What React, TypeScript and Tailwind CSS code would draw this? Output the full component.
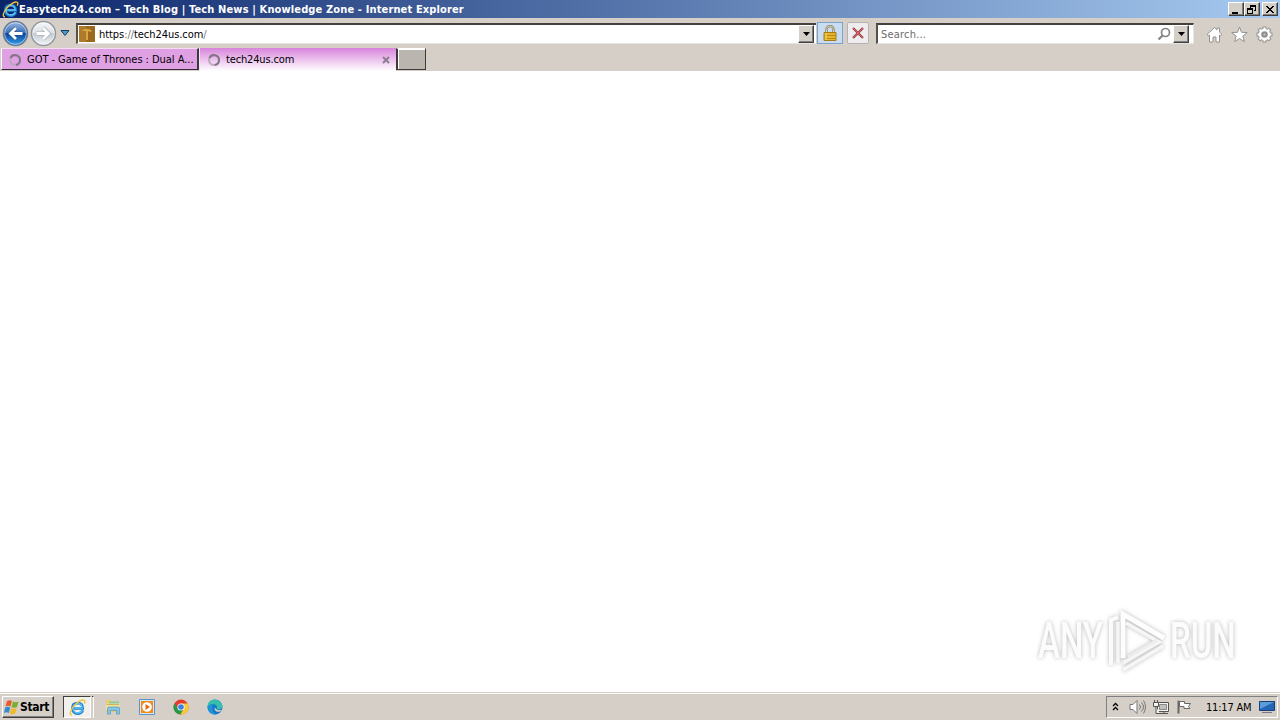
import { ReactNode } from "react";
import clsx from "clsx";

const raised =
  "border border-t-white border-l-white border-r-[#404040] border-b-[#404040] shadow-[inset_-1px_-1px_0_#808080]";

const gearTeeth = [0, 45, 90, 135, 180, 225, 270, 315];

const IeLogo = ({ size }: { size: number }) => (
  <svg width={size} height={size} viewBox="0 0 16 16" fill="none" className="shrink-0">
    <path d="M13 10.600C12.200 12.700 10.400 13.700 8.200 13.700c-3.200 0-5-2.200-5-5S5 3.900 8.200 3.900c3 0 4.700 2 4.700 4.900H4.500" stroke="#1d7fcb" strokeWidth="2.500" />
    <path d="M12.600 10.700C11.700 12.300 10.200 13.200 8.200 13.200c-2.700 0-4.400-2-4.400-4.500S5.500 4.300 8.200 4.300c2.600 0 4.100 1.800 4.100 4.200H5" stroke="#63c6f4" strokeWidth="1.300" />
    <path d="M2.800 15C.2 15 .8 11 4.300 6.900 8 2.500 12.600.1 14.300 1.200c.9.600.7 1.900 0 3.200" stroke="#efc43b" strokeWidth="1.300" />
  </svg>
);

const Arrow = ({ back }: { back?: boolean }) => (
  <svg width="27" height="27" viewBox="0 0 27 27" className="shrink-0">
    <defs>
      <linearGradient id={back ? "backFill" : "nextFill"} x2="0" y2="1">
        <stop stopColor={back ? "#9dbbe2" : "#f8f9fb"} />
        <stop offset=".48" stopColor={back ? "#386fb9" : "#dadfe5"} />
        <stop offset=".5" stopColor={back ? "#08439a" : "#c1c9d2"} />
        <stop offset="1" stopColor={back ? "#37a4ef" : "#f5f7f9"} />
      </linearGradient>
    </defs>
    <circle cx="13.500" cy="13.500" r="12" fill={back ? "url(#backFill)" : "url(#nextFill)"} stroke={back ? "#6d7c94" : "#92979e"} strokeWidth="1.500" />
    <circle cx="13.500" cy="13.500" r="10.800" fill="none" stroke="#fff" strokeOpacity=".5" />
    <g transform={back ? undefined : "translate(27 0) scale(-1 1)"}>
      <path d="M20.500 13.500H8.500m5.500-5.500-5.500 5.500L14 19" fill="none" stroke={back ? "#26548f" : "#a4aab2"} strokeWidth="4.200" />
      <path d="M20.500 13.500H8.500m5.500-5.500-5.500 5.500L14 19" fill="none" stroke="#fff" strokeWidth="2.800" />
    </g>
  </svg>
);

const WindowButton = ({ children, className }: { children: ReactNode; className?: string }) => (
  <button className={clsx("flex h-[14px] w-4 items-center justify-center bg-[#d4d0c8]", raised, className)}>
    <svg width="12" height="11" viewBox="0 0 12 11" fill="none" stroke="#000" shapeRendering="crispEdges" className="shrink-0">
      {children}
    </svg>
  </button>
);

const DropButton = () => (
  <button className={clsx("flex h-[18px] w-4 shrink-0 items-center justify-center bg-[#d4d0c8]", raised)}>
    <svg width="7" height="4" viewBox="0 0 7 4">
      <path d="M0 0h7L3.500 4z" />
    </svg>
  </button>
);

const Spinner = () => (
  <svg width="14" height="14" viewBox="0 0 14 14" fill="none" strokeWidth="2" className="shrink-0">
    <circle cx="7" cy="7" r="5" stroke="#b9a8bb" />
    <path d="M2.500 5A5 5 0 0 1 12 7a5 5 0 0 1-4 5" stroke="#857488" />
  </svg>
);

const TitleBar = () => (
  <header className="flex h-[18px] items-center bg-linear-to-r/srgb from-[#0a246a] to-[#a6caf0] pr-0.5 pl-[2px] text-white">
    <IeLogo size={17} />
    <h1 className="text-[11px] font-bold tracking-[0.135px] whitespace-nowrap">
      Easytech24.com – Tech Blog | Tech News | Knowledge Zone - Internet Explorer
    </h1>
    <div className="ml-auto flex">
      <WindowButton>
        <path d="M2 8.500h6M2 9.500h6" />
      </WindowButton>
      <WindowButton>
        <path d="M4 1.500h6M4.500 1v3M4 2.500h6M9.500 2v5M8 6.500h2M1 4.500h6M1 5.500h6M1.500 5v5M6.500 5v5M1 9.500h6" />
      </WindowButton>
      <WindowButton className="ml-[2px]">
        <path d="m2 2 7 7M3 2l7 7M9 2 2 9M10 2 3 9" />
      </WindowButton>
    </div>
  </header>
);

const Toolbar = () => (
  <nav className="flex h-[30px] items-center">
    <div className="flex w-[76px] items-center pl-[2px]">
      <Arrow back />
      <span className="ml-[1px] flex"><Arrow /></span>
      <svg width="10" height="6" viewBox="0 0 9 6" className="ml-[3px]">
        <path d="M.5.500h8l-4 5z" fill="#4a9dc8" stroke="#153c64" />
      </svg>
    </div>
    <div className="flex h-[21px] w-[740px] items-center border-t-2 border-l-2 border-b border-t-[#45403c] border-l-[#55504b] border-b-[#e8e4df] bg-white pr-[2px] pl-[1px]">
      <svg width="16" height="16" viewBox="0 0 16 16" className="shrink-0">
        <path d="M0 0h16v16H0z" fill="#9b681d" />
        <path d="M0 0h7v16H0z" fill="#ae7b29" />
        <path d="M3 5c2-3 7-3 10 0l-2 1-2-1v9H7V5z" fill="#d9a444" />
      </svg>
      <p className="ml-1 grow pt-px text-[11px] tracking-[-0.06px] text-black">
        <span>https</span>
        <span className="text-[#777]">://</span>
        tech24us.com
        <span className="text-[#777]">/</span>
      </p>
      <DropButton />
    </div>
    <div className="ml-[1px] flex h-[22px] w-[26px] items-center justify-center border border-[#7da2ce] bg-[#c8dcf2]">
      <svg width="14" height="17" viewBox="0 0 14 17">
        <path d="M3.500 8V4.500a3.500 3.500 0 0 1 7 0V8" fill="none" stroke="#8a8060" strokeWidth="2.400" />
        <path d="M3.500 8V4.500a3.500 3.500 0 0 1 7 0V8" fill="none" stroke="#d9d0ad" />
        <path d="M1 7.500h12v8H1z" fill="#e7b529" stroke="#a77b13" />
        <path d="M1 10.500h12M1 13.500h12" stroke="#bd8b18" />
        <path d="M3 8v7" stroke="#f6db74" />
      </svg>
    </div>
    <div className="ml-1 flex h-[22px] w-[22px] items-center justify-center rounded-[2px] border border-[#b5b2b0] bg-[#eeecee]">
      <svg width="12" height="12" viewBox="0 0 12 12" fill="none">
        <path d="m1 1 10 10M11 1 1 11" stroke="#943d42" strokeWidth="2.300" />
        <path d="m1 1 10 10M11 1 1 11" stroke="#df646a" />
      </svg>
    </div>
    <div className="ml-[7px] flex h-[21px] w-[318px] items-center border-t-2 border-r border-b border-l-2 border-t-[#45403c] border-r-[#e8e4df] border-b-[#e8e4df] border-l-[#55504b] bg-white pr-[4px] pl-[3px]">
      <p className="grow pt-px text-[11px] tracking-[0.2px] text-[#6d6d6d]">Search...</p>
      <svg width="14" height="14" viewBox="0 0 14 14" fill="none" stroke="#858585" className="mr-[2px]">
        <circle cx="8.500" cy="5.500" r="4" strokeWidth="1.700" />
        <path d="m5.500 8.500-4 4" strokeWidth="2.300" />
      </svg>
      <DropButton />
    </div>
    <div className="mt-[3px] ml-[12px] flex gap-2">
      <svg width="17" height="17" viewBox="0 0 17 17" fill="#fff" stroke="#929292">
        <path d="m1 8.500 7.500-7 2.500 2.300V2h2.500v4.200L16 8.500l-1.500 1.300-1-.8v7H10v-5H7v5H3.500V9l-1 .8z" />
      </svg>
      <svg width="17" height="17" viewBox="0 0 17 17" fill="#fff" stroke="#929292">
        <path d="m8.500 1 2 5.300 5.800.2-4.500 3.600 1.600 5.600-4.900-3.200-4.900 3.200 1.600-5.600L.7 6.500l5.800-.2z" />
      </svg>
      <svg width="17" height="17" viewBox="0 0 17 17" fill="none">
        {gearTeeth.map((angle) => (
          <path key={angle} d="M8.500 4V1" stroke="#929292" strokeWidth="4" strokeLinecap="square" transform={`rotate(${angle} 8.500 8.500) translate(0 1.500)`} />
        ))}
        <circle cx="8.500" cy="8.500" r="4.500" stroke="#929292" strokeWidth="4" />
        {gearTeeth.map((angle) => (
          <path key={angle} d="M8.500 4V1.500" stroke="#fff" strokeWidth="2.200" transform={`rotate(${angle} 8.500 8.500)`} />
        ))}
        <circle cx="8.500" cy="8.500" r="4.500" stroke="#fff" strokeWidth="2.400" />
      </svg>
    </div>
  </nav>
);

const Tabs = () => (
  <div className="flex h-[23px] items-start pl-[1px] text-[11px] text-black">
    <div className="flex h-[22px] w-[198px] items-center border border-t-[#f5dcf5] border-r-2 border-l-white border-r-[#403840] border-b-[#332b35] bg-[#dfa0e4] pt-px pl-[6px]">
      <Spinner />
      <span className="ml-[5px] tracking-[-0.04px] whitespace-nowrap">GOT - Game of Thrones : Dual A...</span>
    </div>
    <div className="flex h-[23px] w-[197px] items-center border-l border-l-[#f5e9f5] bg-linear-to-b/srgb from-[#d884dc] to-white pl-[7px]">
      <Spinner />
      <span className="ml-[5px] grow tracking-[-0.15px]">tech24us.com</span>
      <svg width="8" height="8" viewBox="0 0 8 8" className="mr-[6px]" stroke="#8f7b91" strokeWidth="2">
        <path d="m1 1 6 6M7 1 1 7" />
      </svg>
    </div>
    <div className="h-[22px] w-[30px] border border-t-white border-r-[#3e3a37] border-l-2 border-b-[#3e3a37] border-l-[#3e3a37] bg-[#bbb5af] shadow-[inset_1px_1px_0_white]" />
  </div>
);

const Watermark = () => (
  <div className="flex h-[66px] w-[198px] items-center text-[50px] leading-none text-[#fcfcfc] drop-shadow-[0_0_2px_#b8b8b8]">
    <span className="w-[70px] origin-left scale-x-[0.66] font-['Roboto'] font-medium">ANY</span>
    <svg width="60" height="64" viewBox="0 0 60 64" fill="none" className="shrink-0">
      <path d="M3 56V11l7-3" stroke="#fbfbfb" strokeWidth="4" />
      <path d="M15 49V5l41 24" stroke="#fdfdfd" strokeWidth="5" />
      <path d="M10 54V13M18 14l33 19-36 21M15 61l40-24" stroke="#f6f6f6" strokeWidth="3.500" />
      <path d="M20 48l29-17" stroke="#ededed" strokeWidth="3" />
    </svg>
    <span className="ml-[2px] w-[66px] origin-left scale-x-[0.66] font-['Roboto'] font-medium">RUN</span>
  </div>
);

const Taskbar = () => (
  <footer className="flex h-7 items-center border-t border-[#d6cfc8] bg-[#d6cfc8] pt-px pr-[2px] pl-[2px] text-[11px] text-black shadow-[inset_0_1px_0_white]">
    <button className={clsx("flex h-[22px] w-[52px] items-center bg-[#d6cfc8] pl-[1px] font-bold", raised)}>
      <svg width="16" height="16" viewBox="0 0 16 16" className="shrink-0">
        <path d="M3 2c2-1 3-1 5 0L6.500 7.500C4.700 6.500 3.400 6.600 1.500 7.500z" fill="#e75c2a" />
        <path d="M9 2.500c2 1 3.500 1 5.500 0L13 8c-2 1-3.500 1-5.500 0z" fill="#79ae35" />
        <path d="M1.200 8.500c2-.9 3.300-.9 5 0L4.800 14c-1.700-1-3-.9-4.800 0z" fill="#328bd5" />
        <path d="M7.200 9c2 1 3.500 1 5.500 0l-1.500 5.500c-2 1-3.500 1-5.500 0z" fill="#f1ba28" />
      </svg>
      <span className="text-[12px] tracking-[-0.35px]">Start</span>
    </button>
    <div className="ml-[9px] flex h-[22px] w-[28px] items-center justify-center border border-t-[#404040] border-r-white border-b-white border-l-[#404040] bg-[#f2f0ed]">
      <IeLogo size={17} />
    </div>
    <div className="ml-px h-[22px] w-[2px] border-t border-r border-t-[#404040] border-r-white" />
    <div className="ml-[11px] flex items-center gap-[18px]">
      <svg width="16" height="16" viewBox="0 0 16 16">
        <path d="M1 1h5l1 2h7v10H1z" fill="#e9cf72" />
        <path d="M4 2.500h10V9H4z" fill="#8fc9a0" />
        <path d="M1 4.500h13.500V11H1z" fill="#f3e39c" />
        <path d="M1.500 5.500H14" stroke="#cdb45a" />
        <path d="M2.500 15V9.500q0-1.500 1.500-1.500h9q1.500 0 1.500 1.500V15h-3v-3.500h-6V15z" fill="#86c4e4" stroke="#4a98c0" strokeWidth=".7" />
      </svg>
      <svg width="16" height="16" viewBox="0 0 16 16">
        <path d="M.5.500h15v15H.500z" fill="#d7e9f7" stroke="#5695c6" />
        <path d="M2 2h12v12H2z" fill="#f18a19" />
        <circle cx="8" cy="8" r="4.800" fill="#fff" />
        <path d="m6.500 5 4.500 3-4.500 3z" fill="#e56a12" />
      </svg>
      <svg width="16" height="16" viewBox="0 0 16 16">
        <circle cx="8" cy="8" r="7.500" fill="#e33b2e" />
        <path d="M1.500 4.300A7.500 7.500 0 0 0 7.300 15.500L11 9.700 5 9.800z" fill="#249b4b" />
        <path d="M8 4.500h6.600A7.500 7.500 0 0 1 7.300 15.500L11 9.700z" fill="#f9ca31" />
        <circle cx="8" cy="8" r="3.600" fill="#fff" />
        <circle cx="8" cy="8" r="2.800" fill="#397fe5" />
      </svg>
      <svg width="16" height="16" viewBox="0 0 16 16">
        <circle cx="8" cy="8" r="7.500" fill="#1477c7" />
        <path d="M.7 6C2-.5 13-1.500 15.400 6.700c.6 3-3 4.600-5.700 3.300C11 7.500 9 5.500 6.500 5.300 3.500 5 1.300 6.500.500 8z" fill="#35bfae" />
        <path d="M6.500 6C4 8 5.500 13 9 15.400 4 16 .7 12.500.5 8 2 6 4.300 5.500 6.500 6z" fill="#2093d6" />
        <path d="M9 10c2 1.500 4 1.500 6 .8-.8 1.500-2 2-3.700 2C8 12.800 7 10 8 8.500z" fill="#d6cfc8" />
      </svg>
    </div>
    <div className="ml-auto flex h-[22px] w-[172px] items-center border border-t-[#808080] border-r-white border-b-white border-l-[#808080] pl-[5px]">
      <svg width="7" height="9" viewBox="0 0 7 9" fill="none" stroke="#000" strokeWidth="1.300" className="mb-[2px]">
        <path d="m1 4 2.500-2.500L6 4M1 8l2.500-2.500L6 8" />
      </svg>
      <svg width="17" height="16" viewBox="0 0 17 16" fill="none" stroke="#777" className="ml-[10px]">
        <path d="M1 5.500h3l4-4v13l-4-4H1z" fill="#fff" />
        <path d="M10.500 5.500q2 2.500 0 5M12.500 3.500q4 4.500 0 9M14.500 1.500q4 6.500 0 13" />
      </svg>
      <svg width="17" height="16" viewBox="0 0 17 16" fill="#f4f3f0" stroke="#555" className="ml-[7px]">
        <path d="M4.500 3.500h11v9h-11zM7 14.500h8M11 12.500v2" />
        <path d="M6.500 5.500h7v5h-7z" fill="#c3c0bb" stroke="#888" />
        <path d="M.5 3.500h5v4h-5zM1.500 1v2M4.500 1v2M3 8v6.500h4" />
      </svg>
      <svg width="16" height="16" viewBox="0 0 16 16" fill="#fff" stroke="#666" className="ml-[6px]">
        <path d="M2.500 1.500v13" strokeWidth="2" />
        <path d="M3.500 2.500h5v2h6l-2 3 1.500 2H8v-2H3.500z" />
      </svg>
      <span className="ml-[14px] w-[47px] text-[11px] tracking-[-0.2px] whitespace-nowrap">11:17 AM</span>
      <svg width="16" height="14" viewBox="0 0 16 14" className="ml-[6px] shrink-0">
        <path d="M.5 1.500h15v9H.500z" fill="#2366b4" stroke="#183f77" />
        <path d="M1 2h14L1 9z" fill="#5b9cdb" />
        <path d="M3 12.500h10" stroke="#747b84" />
      </svg>
    </div>
  </footer>
);

export default function App() {
  return (
    <div className="flex h-[720px] w-[1280px] flex-col overflow-hidden bg-[#d6cfc8] font-['DejaVu_Sans_Condensed','DejaVu_Sans',sans-serif] leading-none">
      <TitleBar />
      <Toolbar />
      <Tabs />
      <main className="flex grow items-end justify-end bg-white pr-[44px] pb-[18px]">
        <Watermark />
      </main>
      <Taskbar />
    </div>
  );
}
